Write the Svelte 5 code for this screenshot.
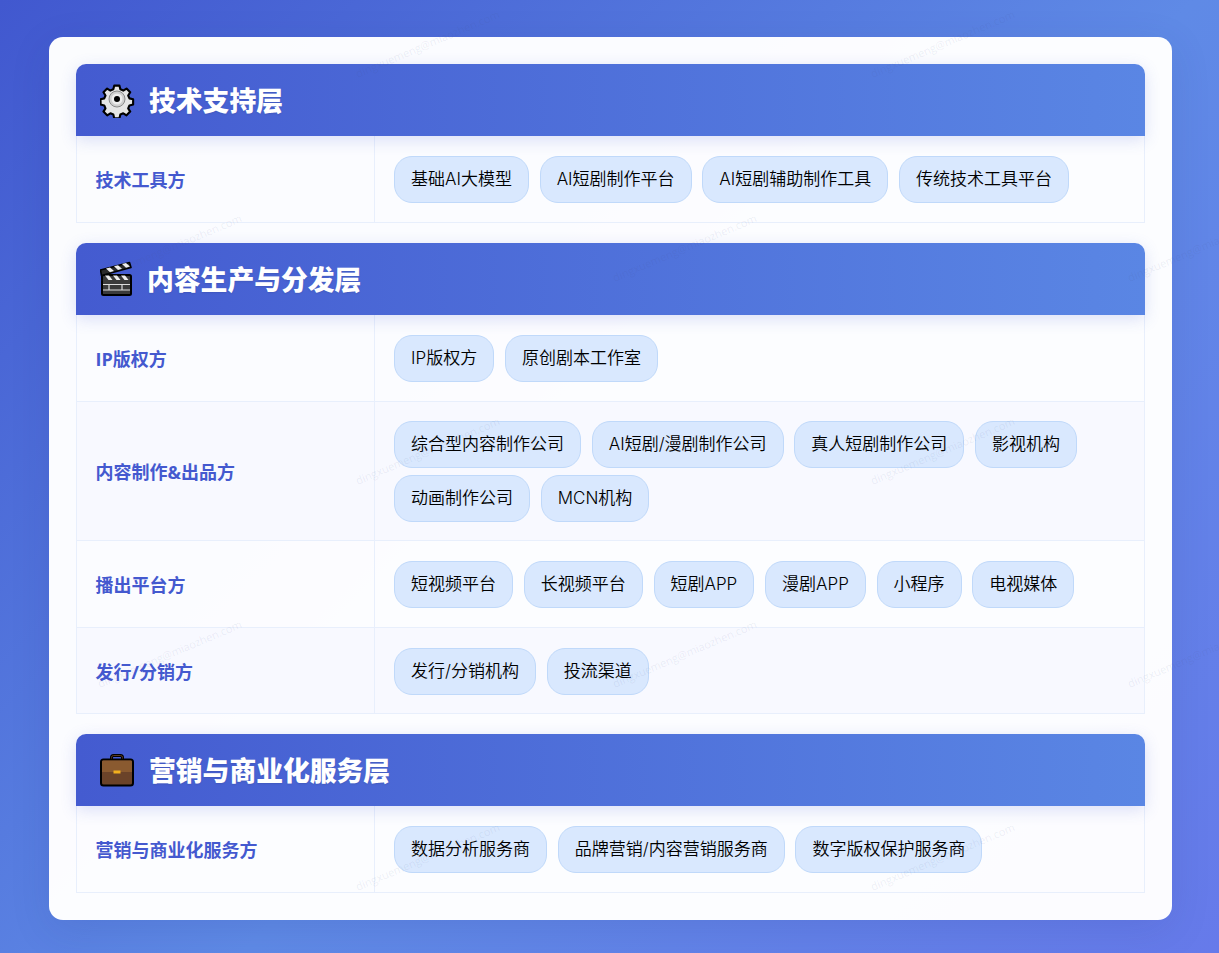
<script lang="ts">
  type Row = { label: string; tags: string[] };
  type Layer = { icon: 'gear' | 'clapper' | 'case'; title: string; rows: Row[] };

  const layers: Layer[] = [
    {
      icon: 'gear',
      title: '技术支持层',
      rows: [
        { label: '技术工具方', tags: ['基础AI大模型', 'AI短剧制作平台', 'AI短剧辅助制作工具', '传统技术工具平台'] },
      ],
    },
    {
      icon: 'clapper',
      title: '内容生产与分发层',
      rows: [
        { label: 'IP版权方', tags: ['IP版权方', '原创剧本工作室'] },
        {
          label: '内容制作&出品方',
          tags: ['综合型内容制作公司', 'AI短剧/漫剧制作公司', '真人短剧制作公司', '影视机构', '动画制作公司', 'MCN机构'],
        },
        { label: '播出平台方', tags: ['短视频平台', '长视频平台', '短剧APP', '漫剧APP', '小程序', '电视媒体'] },
        { label: '发行/分销方', tags: ['发行/分销机构', '投流渠道'] },
      ],
    },
    {
      icon: 'case',
      title: '营销与商业化服务层',
      rows: [
        { label: '营销与商业化服务方', tags: ['数据分析服务商', '品牌营销/内容营销服务商', '数字版权保护服务商'] },
      ],
    },
  ];

  // watermark stamps, staggered like the tiled original
  const marks: [number, number][] = [
    [358, 78], [873, 78],
    [100, 282], [615, 282], [1130, 282],
    [358, 485], [873, 485],
    [100, 688], [615, 688], [1130, 688],
    [358, 891], [873, 891],
  ];
</script>

<div class="page">
  <main class="card">
    {#each layers as layer}
      <section class="layer">
        <header class="layer-head">
          <span class="icon icon-{layer.icon}" aria-hidden="true">
            {#if layer.icon === 'gear'}
              <svg viewBox="0 0 36 36" width="36" height="36">
                <path
                  d="M15 3h6l1 4.200 3.300 1.400 3.700-2.300 4.200 4.200-2.300 3.700 1.400 3.300 4.200 1v6l-4.200 1-1.400 3.300 2.300 3.700-4.200 4.200-3.700-2.300-3.300 1.400-1 4.200h-6l-1-4.200-3.300-1.400-3.700 2.300-4.200-4.200 2.300-3.700-1.400-3.300-4.200-1v-6l4.200-1 1.400-3.300-2.300-3.700 4.200-4.200 3.700 2.300 3.300-1.400z"
                  transform="translate(1 1) scale(.88)"
                  fill="#e6e6e6"
                  stroke="#000"
                  stroke-width="2.400"
                  stroke-linejoin="round"
                />
                <circle cx="17" cy="17" r="8" fill="#cfcfcf" stroke="#8a8a8a" stroke-width="1" />
                <circle cx="17" cy="17" r="5.500" fill="#eee" />
                <circle cx="17" cy="17" r="3" fill="#000" />
              </svg>
            {:else if layer.icon === 'clapper'}
              <svg viewBox="0 0 34 36" width="34" height="36">
                <rect x="2" y="14" width="29" height="20" rx="1.500" fill="#3b3b3b" stroke="#000" stroke-width="2" />
                <path d="M1.500 14.500 31 6.500 29.500 1.500 0.500 9z" fill="#2a2a2a" stroke="#000" stroke-width="1.600" stroke-linejoin="round" />
                <path d="M6 7.500 10 6.400 14 10 10 11.200zM14 5.300 18 4.200 22 7.800 18 8.900zM22 3.100 26 2 30 5.600 26 6.700z" fill="#eee" />
                <path d="M5 14.500h4l3.500 4.500h-4zM13 14.500h4l3.500 4.500h-4zM21 14.500h4l3.500 4.500h-4z" fill="#eee" />
                <path d="M3 23.500h27M3 29h27M9 23.500v5.500M22 23.500v5.500" stroke="#ddd" stroke-width="1.200" fill="none" />
              </svg>
            {:else}
              <svg viewBox="0 0 36 36" width="36" height="36">
                <path d="M11.500 9V5.500a2 2 0 0 1 2-2h7a2 2 0 0 1 2 2V9" fill="none" stroke="#000" stroke-width="3" />
                <path d="M11.500 9V5.500a2 2 0 0 1 2-2h7a2 2 0 0 1 2 2V9" fill="none" stroke="#5b3a21" stroke-width="1" />
                <rect x="1" y="7.500" width="32" height="26" rx="2.500" fill="#6b4329" stroke="#000" stroke-width="2" />
                <path d="M2 9.500a1 1 0 0 1 1-1h28a1 1 0 0 1 1 1V20H2z" fill="#8a5a30" />
                <rect x="13.500" y="18.500" width="7" height="3" fill="#f2b01e" />
              </svg>
            {/if}
          </span>
          <h2>{layer.title}</h2>
        </header>
        <div class="rows">
          {#each layer.rows as row}
            <div class="row">
              <div class="label">{row.label}</div>
              <div class="tags">
                {#each row.tags as tag}
                  <span class="tag">{tag}</span>
                {/each}
              </div>
            </div>
          {/each}
        </div>
      </section>
    {/each}
  </main>

  <div class="marks" aria-hidden="true">
    {#each marks as [x, y]}
      <span class="mark" style="left:{x}px;top:{y}px">dingxuemeng@miaozhen.com</span>
    {/each}
  </div>
</div>

<style>
  :global(body) {
    margin: 0;
  }

  .page {
    position: relative;
    box-sizing: border-box;
    height: 953px;
    overflow: hidden;
    padding: 37px 47px 33px 49px;
    background: linear-gradient(135deg, #4158cf 0%, #5f8ae6 55%, #667aea 100%);
    font-family: Inter, 'Noto Sans CJK SC', sans-serif;
  }

  .card {
    display: flex;
    flex-direction: column;
    gap: 20px;
    padding: 27px;
    border-radius: 14px;
    background: rgba(255, 255, 255, 0.98);
    box-shadow: 0 10px 40px rgba(30, 50, 120, 0.12);
  }

  .layer-head {
    position: relative;
    display: flex;
    align-items: center;
    gap: 13px;
    box-sizing: border-box;
    height: 72px;
    padding: 0 24px;
    border-radius: 10px 10px 0 0;
    background: linear-gradient(90deg, #445bd0 0%, #5a86e4 100%);
    box-shadow: 0 4px 16px rgba(68, 91, 208, 0.18);
  }

  .icon {
    display: flex;
    flex: 0 0 auto;
  }

  h2 {
    margin: 0 0 1px;
    color: #fff;
    font-family: 'Noto Sans CJK SC', sans-serif;
    font-size: 26.800px;
    font-weight: 900;
    line-height: 1.4;
    text-shadow: 0 1px 2px rgba(0, 0, 0, 0.1);
  }

  .rows {
    border: 1px solid #e8effc;
    border-top: none;
  }

  .row {
    display: flex;
  }

  .row + .row {
    border-top: 1px solid #e8effc;
  }

  .row:nth-child(even) {
    background: #f8f9ff;
  }

  .label {
    display: flex;
    align-items: center;
    box-sizing: border-box;
    flex: 0 0 298px;
    padding: 0 18.500px;
    border-right: 1px solid #e8effc;
    color: #4459cf;
    font-family: 'Open Sans', 'Noto Sans CJK SC', sans-serif;
    font-size: 18px;
    font-weight: 700;
  }

  .tags {
    display: flex;
    flex: 1;
    flex-wrap: wrap;
    gap: 7.500px 10.750px;
    padding: 20px 19px 19.500px;
  }

  /* the wrapped row and the last one sit a little tighter */
  .row:nth-child(2) .tags {
    padding-top: 19px;
    padding-bottom: 18.500px;
  }

  .row:nth-child(4) .tags {
    padding-bottom: 18.500px;
  }

  .tag {
    padding: 9px 16px;
    border: 1px solid #c0d9fa;
    border-radius: 18px;
    background: #d9e8fe;
    color: #000;
    font-size: 17px;
    font-weight: 350;
    line-height: 26.500px;
  }

  .marks {
    position: absolute;
    inset: 0;
    pointer-events: none;
  }

  .mark {
    position: absolute;
    margin: -11px 0 0 -5px;
    color: rgba(70, 80, 130, 0.09);
    font-family: 'Open Sans', sans-serif;
    font-size: 11px;
    white-space: nowrap;
    transform: rotate(-23deg);
    transform-origin: left top;
  }
</style>
